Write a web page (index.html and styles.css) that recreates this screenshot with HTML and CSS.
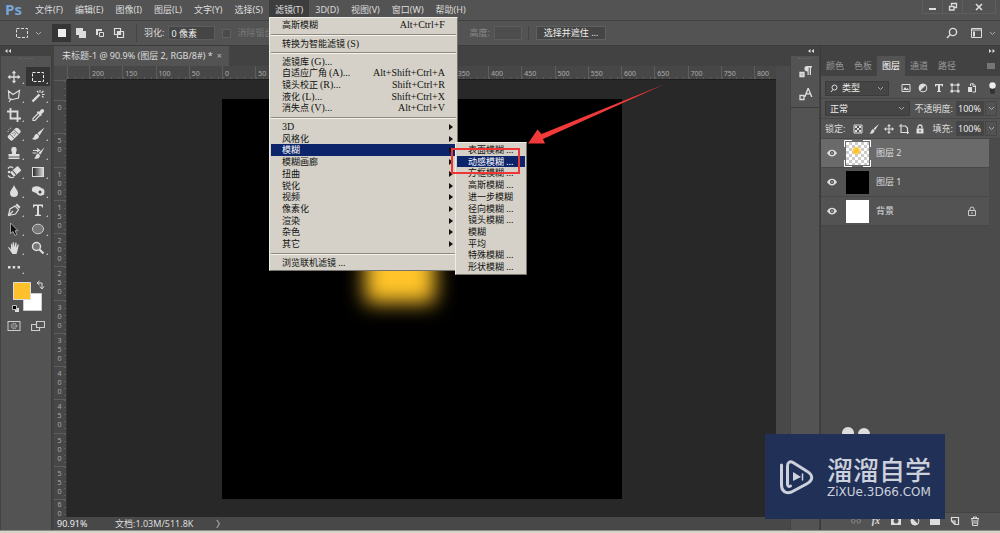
FILE: index.html
```html
<!DOCTYPE html>
<html lang="zh-CN">
<head>
<meta charset="utf-8">
<title>未标题-1 @ 90.9%</title>
<link rel="stylesheet" href="styles.css">
</head>
<body>
<div class="app">
  <header class="menubar">
    <span class="brand">Ps</span>
    <nav class="menus">
      <button class="menus__item">文件(F)</button>
      <button class="menus__item">编辑(E)</button>
      <button class="menus__item">图像(I)</button>
      <button class="menus__item">图层(L)</button>
      <button class="menus__item">文字(Y)</button>
      <button class="menus__item">选择(S)</button>
      <div class="menus__open">
        <button class="menus__item menus__item--active">滤镜(T)</button>
        <div class="drop">
          <div class="drop__group drop__group--one">
            <button class="row">高斯模糊<kbd>Alt+Ctrl+F</kbd></button>
          </div>
          <div class="drop__group drop__group--one">
            <button class="row">转换为智能滤镜<i>(S)</i></button>
          </div>
          <div class="drop__group drop__group--five">
            <button class="row">滤镜库<i>(G)...</i></button>
            <button class="row">自适应广角<i>(A)...</i><kbd>Alt+Shift+Ctrl+A</kbd></button>
            <button class="row">镜头校正<i>(R)...</i><kbd>Shift+Ctrl+R</kbd></button>
            <button class="row">液化<i>(L)...</i><kbd>Shift+Ctrl+X</kbd></button>
            <button class="row">消失点<i>(V)...</i><kbd>Alt+Ctrl+V</kbd></button>
          </div>
          <div class="drop__group drop__group--eleven">
            <button class="row row--more"><i class="flush">3D</i></button>
            <button class="row row--more">风格化</button>
            <button class="row row--more row--active">模糊</button>
            <button class="row row--more">模糊画廊</button>
            <button class="row row--more">扭曲</button>
            <button class="row row--more">锐化</button>
            <button class="row row--more">视频</button>
            <button class="row row--more">像素化</button>
            <button class="row row--more">渲染</button>
            <button class="row row--more">杂色</button>
            <button class="row row--more">其它</button>
          </div>
          <div class="drop__group drop__group--last">
            <button class="row">浏览联机滤镜<i>...</i></button>
          </div>
          <div class="drop sub">
            <button class="row">表面模糊<i>...</i></button>
            <button class="row row--active">动感模糊<i>...</i></button>
            <button class="row">方框模糊<i>...</i></button>
            <button class="row">高斯模糊<i>...</i></button>
            <button class="row">进一步模糊</button>
            <button class="row">径向模糊<i>...</i></button>
            <button class="row">镜头模糊<i>...</i></button>
            <button class="row">模糊</button>
            <button class="row">平均</button>
            <button class="row">特殊模糊<i>...</i></button>
            <button class="row">形状模糊<i>...</i></button>
          </div>
        </div>
      </div>
      <button class="menus__item">3D(D)</button>
      <button class="menus__item">视图(V)</button>
      <button class="menus__item">窗口(W)</button>
      <button class="menus__item">帮助(H)</button>
    </nav>
    <div class="winctl">
      <button aria-label="最小化"><svg width="10" height="10" viewBox="0 0 10 10"><path d="M1 6h7v2H1z" fill="#ddd"/></svg></button>
      <button aria-label="还原"><svg width="10" height="10" viewBox="0 0 10 10" fill="none" stroke="#ddd" stroke-width="1.3"><path d="M3.5 3.5V1.5h5v4h-2M1.500 4.500h4.500v3.500H1.500z"/></svg></button>
      <button class="winctl__close" aria-label="关闭"><svg width="10" height="10" viewBox="0 0 10 10"><path d="M2 2l6 6M8 2l-6 6" stroke="#ddd" stroke-width="1.6"/></svg></button>
    </div>
  </header>

  <section class="options">
    <button class="options__tool" aria-label="矩形选框工具">
      <svg width="14" height="12" viewBox="0 0 14 12"><rect x="1.500" y="1.500" width="11" height="9" fill="none" stroke="#ddd" stroke-dasharray="3 1.500"/></svg>
      <svg class="chev" width="7" height="5" viewBox="0 0 7 5"><path d="M1 1l2.500 2.500L6 1"/></svg>
    </button>
    <div class="modes">
      <button class="is-on" aria-label="新选区"><svg width="12" height="12" viewBox="0 0 12 12"><path d="M2 2h8v8H2z" fill="#eee"/></svg></button>
      <button aria-label="添加到选区"><svg width="12" height="12" viewBox="0 0 12 12"><path d="M1 1h7v3h3v7H4V8H1z" fill="#ddd"/></svg></button>
      <button aria-label="从选区减去"><svg width="12" height="12" viewBox="0 0 12 12"><path d="M2 2h6v2H4v4H2z" fill="#ddd"/><path d="M5.500 5.500h4v4h-4z" fill="none" stroke="#ddd"/></svg></button>
      <button aria-label="与选区交叉"><svg width="12" height="12" viewBox="0 0 12 12"><path d="M1.500 1.500h6v6h-6zM4.500 4.500h6v6h-6z" fill="none" stroke="#ddd" stroke-width="1.200"/><path d="M5 5h3v3H5z" fill="#ddd"/></svg></button>
    </div>
    <label class="field">羽化:<input class="field__box" value="0 像素"></label>
    <label class="check"><input type="checkbox" disabled>消除锯齿</label>
    <label class="field field--height">高度:<input class="field__box" disabled></label>
    <button class="mask">选择并遮住 ...</button>
    <div class="options__end">
      <button aria-label="搜索"><svg width="12" height="12" viewBox="0 0 12 12" fill="none" stroke="#ddd" stroke-width="1.400"><circle cx="7" cy="5" r="3.600"/><path d="M4.400 7.600L1 11"/></svg></button>
      <button class="options__work" aria-label="工作区"><svg width="13" height="12" viewBox="0 0 13 12"><path d="M1.500 1.500h10v9h-10zM1.500 3h10" fill="none" stroke="#ddd"/><path d="M3 4.500h2v5H3z" fill="#ddd"/></svg><svg class="chev" width="7" height="5" viewBox="0 0 7 5"><path d="M1 1l2.500 2.500L6 1"/></svg></button>
    </div>
  </section>

  <main class="work">
    <aside class="tools">
      <div class="fold"><svg width="6" height="4" viewBox="0 0 6 4"><path d="M2.500 0v4L0 2zM6 0v4L3.500 2z"/></svg></div>
      <div class="tools__bar">
        <div class="grip"></div>
        <div class="tools__grid">
          <button aria-label="移动"><svg viewBox="0 0 14 14"><path d="M7 2v10M2 7h10" stroke="#ddd" stroke-width="1.300"/><path d="M7 .5l2.200 2.800H4.800zM7 13.500l2.200-2.800H4.800zM.5 7l2.800-2.200v4.400zM13.500 7l-2.800-2.200v4.400z"/></svg></button>
          <button class="is-on" aria-label="矩形选框"><svg viewBox="0 0 14 14"><rect x="1.500" y="2.500" width="11" height="9" fill="none" stroke="#eee" stroke-dasharray="3 1.500"/></svg></button>
          <button aria-label="套索"><svg viewBox="0 0 14 14"><path d="M1.500 2l4.500 3.500L12.500 1.500 11.500 9l-6 1.500L2 9.500zM4 10l-2 3" fill="none" stroke="#ddd" stroke-width="1.200"/></svg></button>
          <button aria-label="魔棒"><svg viewBox="0 0 14 14"><path d="M1.500 12.500l7-7" stroke="#ddd" stroke-width="2.400"/><path d="M9 1v2.500M12.500 2l-2 2M11 5.500h2.500M6 2l1.500 1.500M11 7l1.500 1.500" stroke="#ddd" stroke-width="1.100"/></svg></button>
          <button aria-label="裁剪"><svg viewBox="0 0 14 14"><path d="M3.500 0v10.500H14M0 3.500h10.500V14" fill="none" stroke="#ddd" stroke-width="1.800"/></svg></button>
          <button aria-label="吸管"><svg viewBox="0 0 14 14"><path d="M8 4l2-2.400a1.800 1.800 0 0 1 2.600 2.600L10.200 6.200l.8.800-1.200 1.200-4-4L7 3z"/><path d="M7.500 5L2 10.500V12.500H4L9 7" fill="none" stroke="#ddd" stroke-width="1.200"/></svg></button>
          <button aria-label="修复画笔"><svg viewBox="0 0 14 14"><g transform="rotate(-45 7 7)"><rect x="0" y="4" width="14" height="6.500" rx="2"/><path d="M4 4v6.500M10 4v6.500" stroke="#555" stroke-width=".8"/><path d="M6 6h.8M7.800 6h.8M6 8h.8M7.800 8h.8" stroke="#444"/></g><path d="M1 5a4 4 0 0 1 4-4" fill="none" stroke="#ddd" stroke-dasharray="1 1"/></svg></button>
          <button aria-label="画笔"><svg viewBox="0 0 14 14"><path d="M13.500.5L6.500 6 8.500 8.500zM6 6.800C3 7 4 10.500 1 11.800c3 1.900 7.300.5 7-3z"/></svg></button>
          <button aria-label="仿制图章"><svg viewBox="0 0 14 14"><path d="M5 6.500C3.500 3 4.500 1 7 1s3.500 2 2 5.500V8h3.500v2.500h-11V8H5zM1.500 11.500h11V13h-11z"/></svg></button>
          <button aria-label="历史画笔"><svg viewBox="0 0 14 14"><path d="M13.500 1.500L7.500 7l1.800 1.800zM7 7.500C4.500 8 5.500 11 3 12.300c3 1.300 5.900 0 6-3.100z"/><path d="M2 4.500h5M1.500 7h4M6 2.500l2.500 2L6 6" fill="none" stroke="#ddd" stroke-width="1.200"/></svg></button>
          <button aria-label="橡皮擦"><svg viewBox="0 0 14 14"><g transform="rotate(-40 8 7)"><rect x="4" y="4" width="10" height="6" rx="1"/><path d="M7 4v6" stroke="#555"/></g><path d="M1 3.500c1.500-2 3.500-2 5-.5M1 10.500c1.500 2 4 2.500 6 1.500" fill="none" stroke="#ddd" stroke-width="1.300"/><circle cx="2" cy="7" r="1.300"/></svg></button>
          <button aria-label="渐变"><svg viewBox="0 0 14 14"><defs><linearGradient id="gr"><stop offset="0" stop-color="#222"/><stop offset="1" stop-color="#ddd"/></linearGradient></defs><rect x="1.500" y="2.500" width="11" height="9" fill="url(#gr)" stroke="#ddd"/></svg></button>
          <button aria-label="模糊"><svg viewBox="0 0 14 14"><path d="M7 1c1 3 4 5.500 4 8a4 4 0 0 1-8 0c0-2.500 3-5 4-8z"/></svg></button>
          <button aria-label="海绵"><svg viewBox="0 0 14 14"><path d="M1 5c0-2 3-3 6-2.500 2 0 2.500 1.500 4.500 2C13.500 5 14 8 13 10.500 11.500 12 8 12 6.500 10.500 5.500 9 4.500 8.500 2.500 8 1 7.500.5 6 1 5z"/><circle cx="9" cy="8" r="1.500" fill="#444"/></svg></button>
          <button aria-label="钢笔"><svg viewBox="0 0 14 14"><path d="M1.500 12.500L3 6l5-3 3.500 3.500-3 4.500zM1.500 12.500L6 8" fill="none" stroke="#ddd" stroke-width="1.200"/><path d="M8.500 2l1.500-1.500 3.500 3.500L12 5.500z"/></svg></button>
          <button aria-label="文字"><svg viewBox="0 0 14 14"><path d="M2 1.500h10v3h-1L10.500 3H8v8.500l2 .5v1H4v-1l2-.5V3H3.500L3 4.500H2z"/></svg></button>
          <button aria-label="路径选择"><svg viewBox="0 0 14 14"><path d="M3.500 1v10.500l2.500-2 2 4 1.800-1-1.800-3.800H11z" fill="#111" stroke="#ccc" stroke-width=".7"/></svg></button>
          <button aria-label="椭圆"><svg viewBox="0 0 14 14"><ellipse cx="7" cy="7" rx="5.500" ry="4.800" fill="#777" stroke="#ccc"/></svg></button>
          <button aria-label="抓手"><svg viewBox="0 0 14 14"><path d="M1 6.500l1-.5 2 2.500V3l1-.5.7 4V1.500l1.200-.3.5 5 1-4.700 1.200.3-.3 5 1.500-3.500 1 .4-1.300 6L9.500 13H5.500z"/></svg></button>
          <button aria-label="缩放"><svg viewBox="0 0 14 14"><circle cx="5.500" cy="5.500" r="4" fill="#777" stroke="#ddd" stroke-width="1.500"/><path d="M8.500 8.500l4 4" stroke="#ddd" stroke-width="2.200"/></svg></button>
          <button aria-label="更多"><svg viewBox="0 0 14 14"><path d="M1 6h2.500v2.500H1zM5.700 6h2.500v2.500H5.700zM10.500 6H13v2.500h-2.500z"/></svg></button>
        </div>
        <svg class="swatches" viewBox="0 0 50 34"><path d="M22.500 14.500h18v17h-18z" fill="#fff" stroke="#ccc"/><path d="M12.500 3.500h17v17h-17z" fill="#ffc12b" stroke="#ddd"/><path d="M37 4h4v5M38.500 2L36 4l2.500 2M39 7.500l2 2.500 2-2.500" fill="none" stroke="#ddd"/><path d="M14 29h4v4h-4z" fill="#ddd"/><path d="M11.500 26.500h4v4h-4z" fill="#000" stroke="#bbb"/></svg>
        <div class="tools__foot">
          <button aria-label="快速蒙版"><svg viewBox="0 0 14 14"><rect x="1" y="2.500" width="12" height="9" fill="none" stroke="#ccc"/><circle cx="7" cy="7" r="2.800" fill="#777" stroke="#ccc" stroke-dasharray="1 1"/></svg></button>
          <button aria-label="屏幕模式"><svg viewBox="0 0 14 14"><path d="M5.500 2.500h8v6h-8zM5 5.500H.5v6h8V9" fill="none" stroke="#ccc" stroke-width="1.200"/></svg></button>
        </div>
      </div>
    </aside>

    <section class="doc">
      <div class="tabs"><button class="tabs__tab">未标题-1 @ 90.9% (图层 2, RGB/8#) * <span class="tabs__x">×</span></button></div>
      <div class="doc__grid">
        <div class="corner"></div>
        <div class="hruler"><span></span><span>200</span><span>150</span><span>100</span><span>50</span><span>0</span><span>50</span><span>100</span><span>150</span><span>200</span><span>250</span><span>300</span><span>350</span><span>400</span><span>450</span><span>500</span><span>550</span><span>600</span><span>650</span><span>700</span><span>750</span><span>800</span></div>
        <div class="corner"></div>
        <div class="vruler"><span></span><span>0</span><span>50</span><span>100</span><span>150</span><span>200</span><span>250</span><span>300</span><span>350</span><span>400</span><span>450</span><span>500</span><span>550</span><span>60</span></div>
        <div class="stage"><div class="artboard"><div class="blob"></div></div></div>
        <div class="vscroll"></div>
      </div>
      <footer class="status"><span class="status__zoom">90.91%</span><span class="status__info">文档:1.03M/511.8K</span><span>〉</span></footer>
    </section>

    <aside class="dock">
      <div class="fold fold--end"><svg width="6" height="4" viewBox="0 0 6 4"><path d="M2.500 0v4L0 2zM6 0v4L3.500 2z"/></svg></div>
      <div class="dock__bar">
        <div class="dock__set">
          <div class="grip"></div>
          <button aria-label="段落"><svg width="15" height="15" viewBox="0 0 15 15"><path d="M9 1h5v1.500h-1V10h-1.300V2.500h-1V10H9.500V6.500C5.500 6.500 5.500 1 9 1z"/><path d="M2 7.500h4v4H2z" fill="#bbb" stroke="#ddd" stroke-width="1.300"/></svg></button>
          <button aria-label="字符"><svg width="15" height="15" viewBox="0 0 15 15"><path d="M6 10L9.500 1h1.300L14.500 10H13l-1-2.500H8.500L7.500 10zM9 6.200h2.500L10.200 3z"/><path d="M2 8.500h4v4H2z" fill="none" stroke="#ddd" stroke-width="1.300"/></svg></button>
        </div>
      </div>
    </aside>

    <aside class="panel">
      <div class="fold fold--end"><svg width="6" height="4" viewBox="0 0 6 4"><path d="M0 0v4l2.500-2zM3.500 0v4L6 2z"/></svg></div>
      <div class="ptabs">
        <button>颜色</button><button>色板</button><button class="is-on">图层</button><button>通道</button><button>路径</button>
        <svg class="ptabs__menu" width="8" height="7" viewBox="0 0 8 7"><path d="M0 1h8M0 3h8M0 5h8" stroke="#aaa"/></svg>
      </div>
      <div class="prow prow--filter">
        <span class="pick pick--kind">
          <svg class="pick__lens" width="8" height="9" viewBox="0 0 8 9"><circle cx="4.500" cy="3.500" r="2.500"/><path d="M3 5.500L1 8"/></svg>
          <select aria-label="类型"><option>类型</option></select>
          <svg class="chev" width="7" height="5" viewBox="0 0 7 5"><path d="M1 1l2.500 2.500L6 1"/></svg>
        </span>
        <div class="icons icons--wide">
          <button aria-label="像素"><svg viewBox="0 0 10 10"><path d="M1 1.500h8v7H1z" fill="none" stroke="#ddd"/><path d="M2 7l2-3 1.500 2 1-1L8 7z"/></svg></button>
          <button aria-label="调整"><svg viewBox="0 0 10 10"><circle cx="5" cy="5" r="3.900" fill="none" stroke="#ddd"/><path d="M8 2a4 4 0 0 0-6 6z"/></svg></button>
          <button aria-label="文字图层"><svg viewBox="0 0 10 10"><path d="M1 1h8v2.500H8L7.500 2.300H6v5.700l1 .3V9H3v-.7L4 8V2.300H2.500L2 3.500H1z"/></svg></button>
          <button aria-label="形状图层"><svg viewBox="0 0 10 10"><path d="M2 2h6v6H2z" fill="none" stroke="#ddd"/><path d="M.5.500h2.500V3H.5zM7 .5h2.500V3H7zM.5 7H3v2.500H.5zM7 7h2.500v2.500H7z"/></svg></button>
          <button aria-label="智能对象"><svg viewBox="0 0 10 10"><path d="M3.500 3V.8h3L8.500 3v6H5.500M6 1v2.500h2.500" fill="none" stroke="#ddd"/><path d="M1 4h4v5H1z"/></svg></button>
        </div>
        <button class="toggle" aria-label="开关"><svg width="7" height="12" viewBox="0 0 7 12"><rect x="1" y="1" width="5" height="11" rx="2" fill="#333"/><circle cx="3.500" cy="3.500" r="3.200" fill="#eee"/></svg></button>
      </div>
      <div class="prow">
        <span class="pick pick--blend">
          <select aria-label="混合模式"><option>正常</option></select>
          <svg class="chev" width="7" height="5" viewBox="0 0 7 5"><path d="M1 1l2.500 2.500L6 1"/></svg>
        </span>
        <label class="pct">不透明度:<input value="100%"></label>
        <button class="step" aria-label="不透明度滑块"><svg class="chev" width="7" height="5" viewBox="0 0 7 5"><path d="M1 1l2.500 2.500L6 1"/></svg></button>
      </div>
      <div class="prow">
        <span>锁定:</span>
        <div class="icons">
          <button aria-label="锁定透明像素"><svg viewBox="0 0 10 10"><path d="M1 1h8v8H1z" fill="none" stroke="#ddd"/><path d="M2 2h2v2H2zM6 2h2v2H6zM4 4h2v2H4zM2 6h2v2H2zM6 6h2v2H6z"/></svg></button>
          <button aria-label="锁定图像像素"><svg viewBox="0 0 10 10"><path d="M10 0L4.500 4.500l1.500 1.700zM4 5C2 5.500 2.500 8 .5 9.500c3 .5 5-.5 5-3z"/></svg></button>
          <button aria-label="锁定位置"><svg viewBox="0 0 10 10"><path d="M5 1v8M1 5h8" stroke="#ddd"/><path d="M5 0l2 2.200H3zM5 10l2-2.200H3zM0 5l2.200-2v4zM10 5L7.800 3v4z"/></svg></button>
          <button aria-label="锁定画板"><svg viewBox="0 0 10 10"><path d="M2 0v8.500h8M0 2h6.500L8.500 4v6" fill="none" stroke="#ddd" stroke-width="1.200"/></svg></button>
          <button aria-label="锁定全部"><svg viewBox="0 0 10 10"><path d="M1.500 4.500h7v5h-7z"/><path d="M3 4.500V3a2 2 0 0 1 4 0v1.500" fill="none" stroke="#ddd" stroke-width="1.300"/><path d="M4.500 6h1v2h-1z" fill="#444"/></svg></button>
        </div>
        <label class="pct">填充:<input value="100%"></label>
        <button class="step" aria-label="填充滑块"><svg class="chev" width="7" height="5" viewBox="0 0 7 5"><path d="M1 1l2.500 2.500L6 1"/></svg></button>
      </div>
      <div class="layers">
        <div class="layer is-on"><svg class="eye" viewBox="0 0 10 8"><path d="M0 4c2.500-4.500 7.500-4.500 10 0-2.500 4.500-7.500 4.500-10 0z"/><circle cx="5" cy="4" r="2" fill="#444"/><circle cx="5" cy="4" r=".8"/></svg><span class="thumb thumb--alpha"><svg width="27" height="27" viewBox="0 0 27 27"><path d="M.5 7V.5H8M19 .5h7.500V7M26.500 20v6.500H19M8 26.500H.5V20" fill="none" stroke="#fff"/></svg></span><span>图层 2</span></div>
        <div class="layer"><svg class="eye" viewBox="0 0 10 8"><path d="M0 4c2.500-4.500 7.500-4.500 10 0-2.500 4.500-7.500 4.500-10 0z"/><circle cx="5" cy="4" r="2" fill="#444"/><circle cx="5" cy="4" r=".8"/></svg><span class="thumb thumb--black"></span><span>图层 1</span></div>
        <div class="layer"><svg class="eye" viewBox="0 0 10 8"><path d="M0 4c2.500-4.500 7.500-4.500 10 0-2.500 4.500-7.500 4.500-10 0z"/><circle cx="5" cy="4" r="2" fill="#444"/><circle cx="5" cy="4" r=".8"/></svg><span class="thumb"></span><span>背景</span><svg class="lock" width="8" height="10" viewBox="0 0 8 10" fill="none" stroke="#ccc"><path d="M.5 4.500h7v5h-7zM2 4.500V3a2 2 0 0 1 4 0v1.500M4 6v2"/></svg></div>
      </div>
      <div class="pfoot">
        <button aria-label="链接"><svg viewBox="0 0 10 10"><path d="M4 3H2.500a2 2 0 0 0 0 4H4M6 3h1.500a2 2 0 0 1 0 4H6M3 5h4" fill="none" stroke="#888"/></svg></button>
        <button class="fx" aria-label="图层样式">fx</button>
        <button aria-label="蒙版"><svg viewBox="0 0 10 10"><path fill-rule="evenodd" d="M0 1h10v8H0zM5 2.500a2.500 2.500 0 1 0 .1 0z"/></svg></button>
        <button aria-label="调整图层"><svg viewBox="0 0 10 10"><circle cx="5" cy="5" r="4" fill="none" stroke="#ddd"/><path d="M2 2a4 4 0 0 0 6 6z"/></svg></button>
        <button aria-label="新建组"><svg viewBox="0 0 10 10"><path d="M0 1h4l1 1.500h5V9H0z"/></svg></button>
        <button aria-label="新建图层"><svg viewBox="0 0 10 10"><path d="M1.500 1.500h7v7h-3.500v-3.500H1.500zM1.500 5L5 8.500" fill="none" stroke="#ddd" stroke-width="1.200"/></svg></button>
        <button aria-label="删除"><svg viewBox="0 0 10 10"><path d="M1 2.500h8M3.500 2V1h3v1M2 3l.5 6.500h5L8 3M4 4v4M6 4v4" fill="none" stroke="#ddd"/></svg></button>
      </div>
    </aside>
  </main>
  <div class="deskline"></div>

  <svg class="arrow" width="140" height="64" viewBox="0 0 140 64"><path d="M138 1L14.500 51 10.500 46.500 1 60.500 18 60.500 16 56z" fill="#f03a3a"/></svg>
  <div class="frame"></div>
  <svg class="dots" width="32" height="12" viewBox="0 0 32 12" fill="#ddd"><circle cx="8" cy="6" r="6"/><circle cx="24" cy="7" r="6"/></svg>
  <div class="mark">
    <svg width="36" height="38" viewBox="0 0 36 38" fill="none" stroke="#cdd1dc" stroke-width="3" stroke-linecap="round" stroke-linejoin="round"><path d="M2.500 7v20c0 6 4 9 10 7l15-8c7-4 7-9 0-13L14 4.500C11 3 8.500 4 8.500 8v18c0 2 1 3 3 2"/><path d="M14 14l8 5-8 4z" fill="#cdd1dc" stroke="none"/><path d="M23.500 16v6" stroke-width="1.500"/></svg>
    <div class="mark__text"><strong>溜溜自学</strong><span>ZiXUe.3D66.COM</span></div>
  </div>
</div>
</body>
</html>
```
FILE: styles.css
```css
* { box-sizing: border-box; }
body { margin: 0; font: 9px/12px "Noto Sans", "Noto Sans CJK SC", sans-serif; color: #ddd; background: #424242; }
button, input, select { margin: 0; padding: 0; border: 0; border-radius: 0; font: inherit; color: inherit; background: none; }
button { display: flex; align-items: center; justify-content: center; white-space: nowrap; }
svg { display: block; flex: none; fill: #ddd; }
svg[fill="none"] { fill: none; }
.chev path { fill: none; stroke: #aaa; stroke-width: 1; }

.app { position: relative; display: flex; flex-direction: column; min-height: 100vh; }

.menubar { display: flex; height: 21px; background: #535353; border-bottom: 1px solid #424242; }
.brand { width: 29px; padding-left: 5px; font: bold 15px/19px "Open Sans", sans-serif; color: #76a7d8; }
.menus { display: flex; flex: 1; }
.menus__item { height: 19px; padding: 0 6px; }
.menus__item--active { background: #3d3d3d; }
.menus__open { position: relative; z-index: 5; }
.winctl { display: flex; height: 14px; margin-right: 4px; border: 1px solid #5e5e5e; border-top: 0; }
.winctl button { width: 20px; border-right: 1px solid #5e5e5e; }
.winctl .winctl__close { width: 32px; border: 0; }

.drop { position: absolute; top: 17px; left: 0; width: 189px; padding: 1px; color: #111; background: #d5d1c8; border: 1px solid; border-color: #eeece6 #77746d #77746d #eeece6; }
.drop__group { display: flex; flex-direction: column; padding: 3px 0; border-bottom: 1px solid #8d8a83; box-shadow: 0 1px #f4f2ec; }
.drop__group--one { height: 18px; }
.drop__group--five { height: 65px; }
.drop__group--eleven { height: 136px; }
.drop__group--last { height: 15px; padding: 2px 0 0; border: 0; box-shadow: none; }
.drop__group:first-child { height: 16px; padding: 0 0 3px; }
.row { flex: 1; width: 100%; min-height: 0; padding: 0 11px; justify-content: flex-start; line-height: 10px; }
.row i, .row kbd { font: 10px/10px "Liberation Serif", serif; }
.row i { margin-left: 2px; }
.row .flush { margin: 0; }
.row kbd { margin-left: auto; }
.row--more { padding-right: 3px; }
.row--more::after { content: ""; margin-left: auto; border: 3px solid transparent; border-left: 4px solid #111; border-right: 0; }
.row--active { color: #fff; background: #0b246a; }
.sub { display: flex; flex-direction: column; top: 124px; left: 185px; width: 72px; height: 133px; }

.options { display: flex; align-items: center; height: 25px; padding: 0 4px 0 10px; background: #535353; border-bottom: 1px solid #3c3c3c; }
.options__tool { gap: 6px; width: 36px; margin-right: 6px; }
.modes { display: flex; padding-right: 8px; border-right: 1px solid #444; }
.modes button { width: 19px; height: 18px; }
.modes .is-on { background: #363636; }
.field { display: flex; align-items: center; gap: 4px; margin-left: 7px; }
.field__box { width: 47px; height: 14px; padding-left: 2px; background: #454545; border: 1px solid #5c5c5c; color: #eee; }
.check { display: flex; align-items: center; gap: 6px; margin-left: 7px; color: #777; }
.check input { width: 9px; height: 9px; appearance: none; background: #4a4a4a; border: 1px solid #606060; }
.field--height { margin-left: 196px; padding-right: 6px; border-right: 1px solid #444; color: #888; }
.field--height input { width: 28px; background: #4d4d4d; }
.mask { height: 14px; margin-left: 7px; padding: 0 7px; background: #454545; border: 1px solid #606060; color: #eee; }
.options__end { display: flex; gap: 12px; margin-left: auto; }
.options__work { gap: 6px; }

.work { display: flex; flex: 1; min-height: 0; }
.fold { display: flex; align-items: center; height: 10px; padding: 0 5px; }
.fold--end { justify-content: flex-end; }
.grip { width: 14px; height: 2px; margin: 2px auto 0; border-top: 1px dotted #666; }

.tools { display: flex; flex-direction: column; width: 54px; }
.tools__bar { flex: 1; margin: 0 2px 0 1px; padding-bottom: 8px; background: #535353; border-right: 1px solid #3c3c3c; }
.tools__grid, .tools__foot { display: grid; grid-template-columns: repeat(2, 24px); grid-auto-rows: 19px; margin-top: 7px; padding-left: 1px; }
.tools__grid button, .tools__foot button { position: relative; }
.tools__grid button::after { content: ""; position: absolute; right: 2px; bottom: 2px; border: 1px solid #bbb; border-top-color: transparent; border-left-color: transparent; }
.tools__grid svg, .tools__foot svg { width: 14px; height: 14px; }
.tools__grid .is-on { background: #343434; }
.swatches { width: 50px; height: 34px; margin-top: 3px; }
.tools__foot { margin-top: 3px; }

.doc { display: flex; flex-direction: column; flex: 1; min-width: 0; }
.tabs { display: flex; height: 20px; }
.tabs__tab { gap: 4px; padding: 0 7px 0 8px; background: #535353; }
.tabs__x { color: #bbb; }
.doc__grid { display: grid; flex: 1; grid-template-columns: 13px 1fr 14px; grid-template-rows: 14px 1fr; min-height: 0; }
.corner { background: #4a4a4a; }
.hruler { display: grid; grid-template-columns: 22px repeat(20, 1fr) 22px; background: #474747; border-bottom: 1px solid #1e1e1e; }
.hruler span, .vruler span { overflow: hidden; font: 7px/8px "Noto Sans", sans-serif; color: #aaa; }
.hruler span { padding: 4px 0 0 2px; border-left: 1px solid #5d5d5d; background: repeating-linear-gradient(90deg, #5c5c5c 0 1px, transparent 1px 7px) bottom / 100% 2px no-repeat; }
.vruler { display: grid; grid-template-rows: 20px repeat(12, 1fr) 18px; background: #474747; border-right: 1px solid #333; }
.vruler span { writing-mode: vertical-rl; text-orientation: upright; padding: 2px 4px 0 0; line-height: 6px; border-top: 1px solid #5d5d5d; background: repeating-linear-gradient(#5c5c5c 0 1px, transparent 1px 7px) right / 2px 100% no-repeat; }
.vruler span:last-child { padding-top: 0; }
.stage { display: flex; align-items: center; justify-content: center; background: #282828; }
.artboard { position: relative; width: 400px; aspect-ratio: 1; background: #000; }
.blob { position: absolute; left: 143px; top: 136px; width: 70px; height: 68px; background: #ffc42a; filter: blur(10px); }
.vscroll { background: #484848; }
.status { display: flex; align-items: center; height: 13px; padding-left: 3px; background: #484848; }
.status__zoom { width: 58px; color: #eee; }
.status__info { width: 101px; }

.dock { display: flex; flex-direction: column; width: 28px; margin-left: 1px; }
.dock__bar { flex: 1; background: #535353; }
.dock__set { height: 50px; border-bottom: 1px solid #3c3c3c; }
.dock__set button { width: 28px; height: 20px; margin-top: 2px; }

.panel { display: flex; flex-direction: column; width: 180px; margin-left: 1px; border-left: 1px solid #3a3a3a; background: #535353; }
.panel .fold { background: #424242; }
.ptabs { display: flex; align-items: center; height: 20px; background: #424242; color: #999; }
.ptabs button { height: 20px; width: 28px; }
.ptabs .is-on { background: #535353; color: #fff; }
.ptabs__menu { margin-left: auto; margin-right: 5px; }
.prow { display: flex; align-items: center; gap: 5px; height: 20px; padding: 0 3px 0 4px; border-bottom: 1px solid #474747; }
.prow--filter { height: 23px; padding-top: 2px; }
.pick { display: flex; align-items: center; height: 15px; padding: 0 4px; gap: 4px; background: #454545; border: 1px solid #3c3c3c; }
.pick select { flex: 1; min-width: 0; height: 13px; appearance: none; color: #eee; }
.pick--kind { width: 64px; }
.pick--blend { flex: 1; }
.pick__lens { fill: none; stroke: #ddd; }
.icons { display: flex; flex: 1; justify-content: space-around; }
.icons--wide { padding: 0 2px 0 4px; }
.icons svg { width: 10px; height: 10px; }
.toggle { width: 10px; }
.pct { display: flex; align-items: center; gap: 3px; }
.pct input { width: 28px; height: 15px; padding-left: 2px; background: #454545; color: #eee; }
.step { width: 12px; height: 15px; margin-left: -4px; border: 1px solid #454545; }
.layers { flex: 1; padding-right: 11px; background: #4b4b4b; }
.layer { display: flex; align-items: center; height: 29px; padding: 0 13px 0 6px; gap: 7px; background: #535353; border-bottom: 1px solid #474747; }
.layer.is-on { background: #6a6a6a; }
.eye { width: 10px; height: 8px; margin-right: 2px; }
.thumb { width: 23px; height: 23px; background: #fff; }
.thumb--black { background: #000; }
.thumb--alpha { display: grid; place-content: center; background: radial-gradient(circle at 45% 38%, #ffc42a 0 2px, transparent 5px), repeating-conic-gradient(#ccc 0 25%, #fff 0 50%) 0 0 / 6px 6px; }
.lock { margin-left: auto; }
.pfoot { display: flex; align-items: center; justify-content: space-between; height: 18px; padding: 0 20px 2px 30px; border-top: 1px solid #444; }
.pfoot svg { width: 10px; height: 10px; }
.fx { width: 10px; font: italic bold 10px/10px "Liberation Serif", serif; }
.deskline { height: 3px; background: #d6d3ca; border-top: 1px solid #8d8b86; }

.arrow { position: absolute; left: 527px; top: 83px; z-index: 6; }
.frame { position: absolute; left: 451px; top: 148px; z-index: 6; width: 69px; height: 26px; border: 2px solid #f03535; }
.dots { position: absolute; right: 128px; bottom: 94px; }
.mark { position: absolute; right: 55px; bottom: 14px; display: flex; align-items: center; gap: 12px; width: 180px; height: 85px; padding-left: 14px; background: #213056; color: #cdd1dc; }
.mark__text { display: flex; flex-direction: column; gap: 2px; }
.mark strong { font: 500 26px/28px "Noto Sans CJK SC", sans-serif; }
.mark span { font: 12px/14px "DejaVu Sans", sans-serif; }
```
